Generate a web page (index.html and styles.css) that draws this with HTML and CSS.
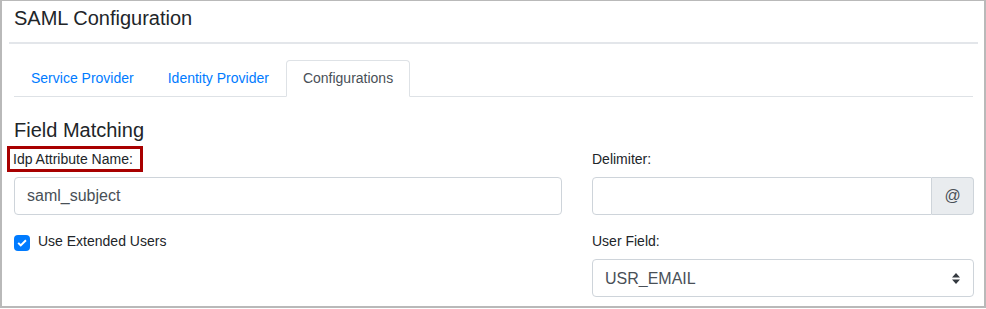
FILE: index.html
```html
<!DOCTYPE html>
<html lang="en">
<head>
<meta charset="UTF-8">
<title>SAML Configuration</title>
<link rel="stylesheet" href="styles.css">
</head>
<body>
  <div class="panel">
    <h2 class="panel-title">SAML Configuration</h2>
    <div class="divider"></div>

    <div class="tabs">
      <a class="tab" href="#">Service Provider</a>
      <a class="tab" href="#">Identity Provider</a>
      <a class="tab active" href="#">Configurations</a>
    </div>

    <div class="section">
      <h3 class="section-title">Field Matching</h3>

      <div class="form-grid">
        <div class="field">
          <label class="field-label spaced"><span class="highlight">Idp Attribute Name:</span></label>
          <input class="form-control" type="text" value="saml_subject">
        </div>

        <div class="field">
          <label class="field-label spaced">Delimiter:</label>
          <div class="input-group">
            <input class="form-control" type="text" value="">
            <span class="addon">@</span>
          </div>
        </div>

        <div class="field">
          <label class="check">
            <span class="check-box">
              <svg width="10" height="10" viewBox="0 0 8 8"><path d="M6.6 1.2 3 4.8 1.5 3.3.4 4.4 3 7l4.7-4.7z" fill="#fff"/></svg>
            </span>
            Use Extended Users
          </label>
        </div>

        <div class="field">
          <label class="field-label">User Field:</label>
          <div class="select-wrap">
            <select class="form-control select">
              <option>USR_EMAIL</option>
            </select>
            <svg class="select-arrows" width="8" height="11" viewBox="0 0 8 11"><path d="M4 0 8 4.5H0zM4 11 0 6.5h8z" fill="#343a40"/></svg>
          </div>
        </div>
      </div>
    </div>
  </div>
</body>
</html>
```

FILE: styles.css
```css
body {
  margin: 0;
  background: #fff;
}

.panel {
  width: 986px;
  height: 308px;
  box-sizing: border-box;
  border: 2px solid #b9b9b9;
  border-top-width: 1px;
  background: #fff;
  font-family: "Liberation Sans", Arial, sans-serif;
  color: #212529;
}

.panel-title {
  margin: 0;
  padding: 5px 12px 0;
  font-size: 20px;
  font-weight: normal;
  line-height: 24px;
}

.divider {
  height: 2px;
  background: #e3e6ea;
  margin: 12px 6px 0 7px;
}

.tabs {
  display: flex;
  margin: 16px 11px 0 12px;
  border-bottom: 1px solid #dee2e6;
}
.tab {
  padding: 8px 16px;
  border: 1px solid transparent;
  border-radius: 4px 4px 0 0;
  margin-bottom: -1px;
  font-size: 14px;
  line-height: 19px;
  color: #007bff;
  text-decoration: none;
}
.tab.active {
  color: #495057;
  background: #fff;
  border-color: #dee2e6 #dee2e6 #fff;
}

.section {
  padding: 0 10px 0 12px;
}
.section-title {
  margin: 21px 0 4px;
  font-size: 20px;
  font-weight: normal;
  line-height: 24px;
}

.form-grid {
  display: grid;
  grid-template-columns: 548px 1fr;
  column-gap: 30px;
  row-gap: 16px;
}

.field-label {
  display: block;
  font-size: 14px;
  line-height: 20px;
  margin-bottom: 8px;
}
.field-label.spaced {
  padding: 3px 0;
  margin-bottom: 5px;
}
.highlight {
  display: inline-block;
  padding: 0 7px 0 3px;
  margin-left: -4px;
  outline: 3px solid #a80000;
}

.form-control {
  display: block;
  width: 100%;
  height: 38px;
  box-sizing: border-box;
  border: 1px solid #ced4da;
  border-radius: 4px;
  padding: 0 12px;
  background: #fff;
  font-family: inherit;
  font-size: 16px;
  color: #495057;
}

.input-group {
  display: flex;
}
.input-group .form-control {
  flex: 1;
  border-radius: 4px 0 0 4px;
}
.addon {
  width: 42px;
  height: 38px;
  box-sizing: border-box;
  display: flex;
  align-items: center;
  justify-content: center;
  background: #e9ecef;
  border: 1px solid #ced4da;
  border-left: none;
  border-radius: 0 4px 4px 0;
  font-size: 16px;
  color: #495057;
}

.check {
  display: flex;
  align-items: flex-start;
  gap: 8px;
  font-size: 14px;
  line-height: 20px;
}
.check-box {
  width: 16px;
  height: 16px;
  margin-top: 4px;
  border-radius: 4px;
  background: #007bff;
  display: flex;
  align-items: center;
  justify-content: center;
}

.select-wrap {
  position: relative;
}
.select {
  appearance: none;
  -webkit-appearance: none;
}
.select-arrows {
  position: absolute;
  right: 14px;
  top: 14px;
}
```
